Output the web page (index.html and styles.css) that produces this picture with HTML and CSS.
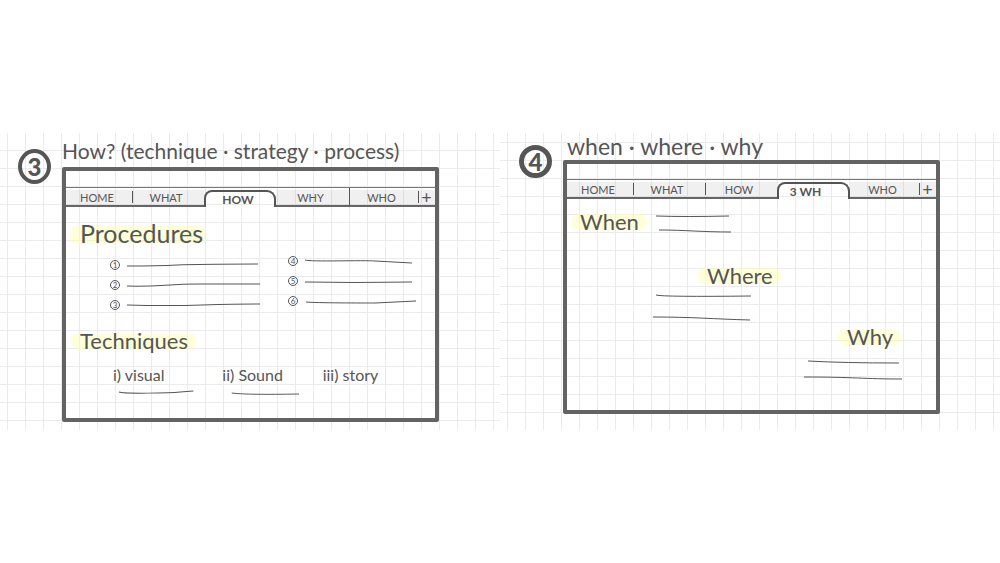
FILE: index.html
```html
<!DOCTYPE html>
<html lang="en">
<head>
<meta charset="utf-8">
<title>Page sketches</title>
<link rel="stylesheet" href="styles.css">
</head>
<body>
<main class="board">
  <section class="sheet sheet-how">
    <div class="badge">3</div>
    <div class="sketch">
      <h1 class="title">How? (technique · strategy · process)</h1>
      <div class="frame">
        <div class="address"></div>
        <nav class="tabs">
          <button class="tab">HOME</button>
          <button class="tab split">WHAT</button>
          <button class="tab active">HOW</button>
          <button class="tab">WHY</button>
          <button class="tab split full">WHO</button>
          <button class="tab split add">+</button>
        </nav>
        <div class="content">
          <h2 class="heading large"><span class="mark">Procedures</span></h2>
          <div class="steps">
            <ol class="list">
              <li class="step"><span class="num">1</span><svg class="stroke" viewBox="0 0 130 8" preserveAspectRatio="none"><path d="M0 5Q30 5 50 4T130 3"/></svg></li>
              <li class="step"><span class="num">2</span><svg class="stroke" viewBox="0 0 130 8" preserveAspectRatio="none"><path d="M0 5C30 6 40 3 70 3L132 3"/></svg></li>
              <li class="step"><span class="num">3</span><svg class="stroke" viewBox="0 0 130 8" preserveAspectRatio="none"><path d="M0 4Q40 5 75 4T132 3"/></svg></li>
            </ol>
            <ol class="list raised">
              <li class="step"><span class="num">4</span><svg class="stroke" viewBox="0 0 112 8" preserveAspectRatio="none"><path d="M0 3C5 5 60 3 70 4L107 6"/></svg></li>
              <li class="step"><span class="num">5</span><svg class="stroke" viewBox="0 0 112 8" preserveAspectRatio="none"><path d="M0 5L50 5.5L107 5"/></svg></li>
              <li class="step"><span class="num">6</span><svg class="stroke" viewBox="0 0 112 8" preserveAspectRatio="none"><path d="M1 5C10 6 60 6 70 6L111 4"/></svg></li>
            </ol>
          </div>
          <h2 class="heading"><span class="mark">Techniques</span></h2>
          <div class="kinds">
            <div class="kind">i) visual<svg class="stroke" viewBox="0 0 73 8" preserveAspectRatio="none"><path d="M0 4C5 6 50 5 60 4L73 3"/></svg></div>
            <div class="kind">ii) Sound<svg class="stroke" viewBox="0 0 73 8" preserveAspectRatio="none"><path d="M4 5Q20 7 76 6"/></svg></div>
            <div class="kind">iii) story</div>
          </div>
        </div>
      </div>
    </div>
  </section>

  <section class="sheet sheet-when">
    <div class="badge">4</div>
    <div class="sketch">
      <h1 class="title">when · where · why</h1>
      <div class="frame">
        <div class="address"></div>
        <nav class="tabs">
          <button class="tab">HOME</button>
          <button class="tab split">WHAT</button>
          <button class="tab split">HOW</button>
          <button class="tab active">3 WH</button>
          <button class="tab">WHO</button>
          <button class="tab split add">+</button>
        </nav>
        <div class="content">
          <div class="when">
            <h2 class="heading"><span class="mark">When</span></h2>
            <div class="lines">
              <svg class="stroke" viewBox="0 0 75 8" preserveAspectRatio="none"><path d="M0 3Q30 4 73 3"/></svg>
              <svg class="stroke" viewBox="0 0 75 8" preserveAspectRatio="none"><path d="M3 3C30 3 45 5 75 5"/></svg>
            </div>
          </div>
          <div class="where">
            <h2 class="heading"><span class="mark">Where</span></h2>
            <div class="lines">
              <svg class="stroke" viewBox="0 0 98 8" preserveAspectRatio="none"><path d="M3 3Q10 5 98 4"/></svg>
              <svg class="stroke" viewBox="0 0 98 8" preserveAspectRatio="none"><path d="M0 3C40 3 60 5 97 6"/></svg>
            </div>
          </div>
          <div class="why">
            <h2 class="heading"><span class="mark">Why</span></h2>
            <div class="lines">
              <svg class="stroke" viewBox="0 0 98 8" preserveAspectRatio="none"><path d="M4 3Q40 5 95 5"/></svg>
              <svg class="stroke" viewBox="0 0 98 8" preserveAspectRatio="none"><path d="M0 3C50 3 60 5 98 5"/></svg>
            </div>
          </div>
        </div>
      </div>
    </div>
  </section>
</main>
</body>
</html>
```
FILE: styles.css
```css
* { box-sizing: border-box; }
body {
  margin: 0;
  min-height: 100vh;
  display: flex;
  align-items: center;
  background: #fff;
  color: #555;
  font-family: Lato, sans-serif;
}
h1, h2, ol { margin: 0; padding: 0; font-weight: 400; }
.board { flex: 1; display: grid; grid-template-columns: repeat(2, minmax(0, 1fr)); }
.sheet {
  display: grid;
  grid-template-columns: 33px minmax(0, 1fr);
  column-gap: 11px;
  padding: 0 61px 8px 18px;
  background-image:
    linear-gradient(to right, #ebebeb 1px, transparent 1px),
    linear-gradient(to bottom, #ebebeb 1px, transparent 1px);
  background-size: 18px 18px;
  background-position: 7px 17px;
}
.sheet-when { background-position: 7px 9px; padding: 0 60px 16px 19px; }
.badge {
  width: 33px;
  height: 35px;
  margin-top: 16px;
  border: 4px solid #555;
  border-radius: 50%;
  display: grid;
  place-items: center;
  font-size: 24px;
  font-weight: 900;
  line-height: 24px;
}
.sheet-when .badge { margin-top: 12px; height: 33px; border-width: 5px; }
.title { font-size: 21px; line-height: 36px; height: 34px; white-space: nowrap; }
.sheet-when .title { padding-left: 4px; font-size: 23px; line-height: 27px; height: 27px; }
.frame { border: 4px solid #636363; border-radius: 2px; }
.address { height: 17px; border-bottom: 1px solid #777; }
.sheet-when .address { height: 16px; }
.tabs { display: grid; grid-template-columns: 66fr 72fr 72fr 73fr 69fr 17fr; }
.tab {
  position: relative;
  min-width: 0;
  height: 19px;
  margin: 0;
  padding: 3px 4px 0 0;
  border: 0;
  border-bottom: 2px solid #666;
  background: linear-gradient(rgba(0, 0, 0, .06), rgba(0, 0, 0, .06)) 0 2px no-repeat;
  color: #555;
  font: 11px/14px Lato, sans-serif;
}
.tab.split::before {
  content: "";
  position: absolute;
  left: 0;
  top: 3px;
  height: 12px;
  border-left: 1px solid #555;
}
.tab.full::before { top: 0; height: 18px; }
.tab.add { font-size: 18px; padding: 0; }
.tab.active {
  margin-top: 2px;
  height: 17px;
  padding: 0 4px 0 0;
  border: 2px solid #555;
  border-bottom: 0;
  border-radius: 8px 9px 0 0;
  background: none;
  font-size: 12px;
  font-weight: 700;
}
.sheet-when .tab.active { padding-right: 16px; }
.heading { font-size: 22px; line-height: 30px; }
.heading.large { font-size: 25px; line-height: 44px; height: 40px; }
.mark { position: relative; display: inline-block; z-index: 0; }
.mark::before {
  content: "";
  position: absolute;
  z-index: -1;
  inset: 7px -8px 7px -9px;
  border-radius: 7px;
  background: rgba(255, 255, 170, .45);
}
.large .mark::before { inset: 14px -2px 11px -10px; }
.sheet-how .content { padding: 4px 14px 22px; }
.steps { display: grid; grid-template-columns: 148fr 129fr; gap: 30px; padding: 4px 4px 11px 30px; }
.list { list-style: none; }
.raised { margin-top: -4px; }
.step { display: flex; align-items: center; gap: 7px; height: 20px; }
.num {
  flex: none;
  width: 10px;
  height: 10px;
  border: 1px solid #555;
  border-radius: 50%;
  font-size: 8px;
  line-height: 8px;
  text-align: center;
}
.stroke { display: block; width: 100%; height: 8px; fill: none; stroke: #555; stroke-width: 1; overflow: visible; }
.step .stroke { flex: 1; min-width: 0; }
.kinds { display: grid; grid-template-columns: 109fr 100fr 98fr; padding: 9px 0 0 33px; font-size: 16px; line-height: 20px; }
.kind .stroke { width: 68%; margin: 3px 0 0 6px; }
.sheet-when .content { padding: 8px 34px 28px 13px; }
.lines { display: grid; }
.when { display: flex; gap: 17px; align-items: start; }
.when .lines { width: 75px; gap: 6px; padding-top: 6px; }
.where { width: 98px; margin: 24px 0 0 73px; }
.where .heading { padding-left: 54px; }
.where .lines { gap: 14px; padding-top: 1px; }
.why { width: 98px; margin: 0 0 0 auto; }
.why .heading { padding-left: 43px; }
.why .lines { gap: 8px; padding-top: 6px; }
```
